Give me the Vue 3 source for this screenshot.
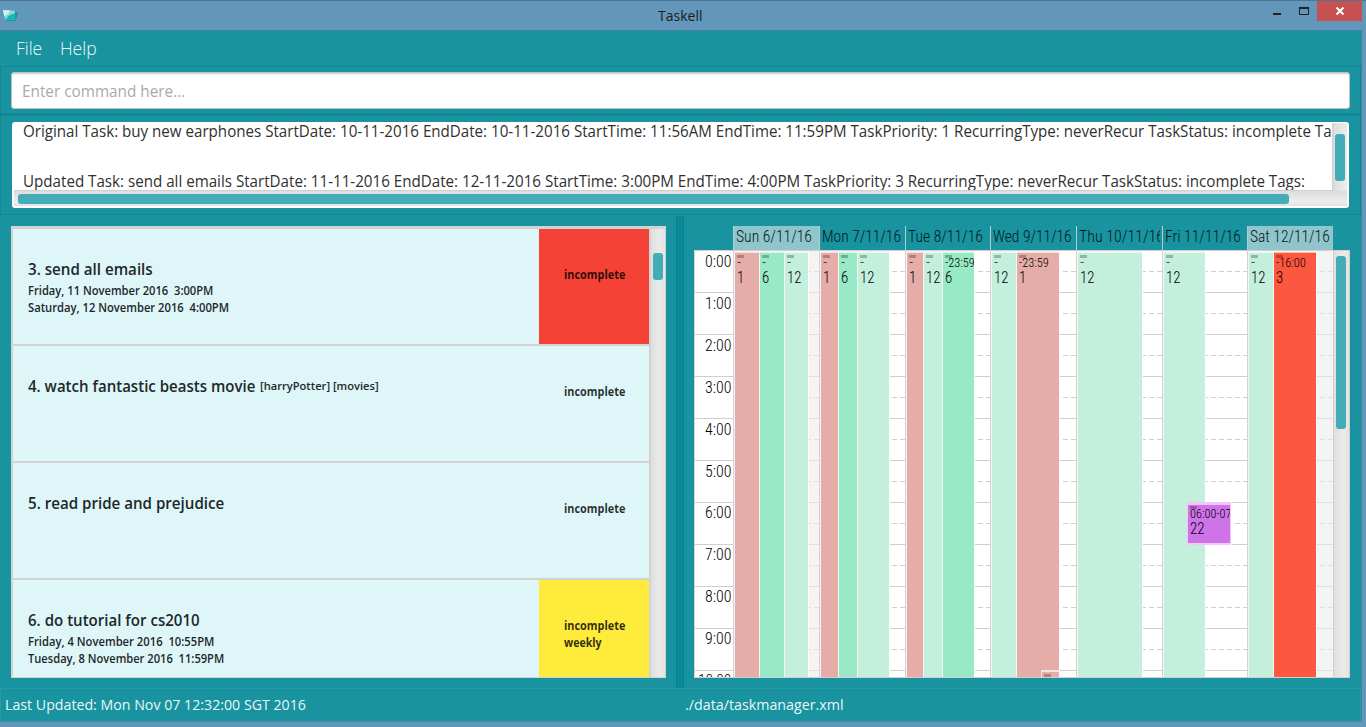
<script setup>
// Narrows or widens a label to the given pixel width
const vFit = {
  mounted(el, { value }) {
    if (value) el.style.transform = `scaleX(${value / el.offsetWidth})`
  }
}

const resultLines = [
  { text: 'Original Task: buy new earphones StartDate: 10-11-2016 EndDate: 10-11-2016 StartTime: 11:56AM EndTime: 11:59PM TaskPriority: 1 RecurringType: neverRecur TaskStatus: incomplete Ta', w: 1309 },
  { text: '', w: 0 },
  { text: 'Updated Task: send all emails StartDate: 11-11-2016 EndDate: 12-11-2016 StartTime: 3:00PM EndTime: 4:00PM TaskPriority: 3 RecurringType: neverRecur TaskStatus: incomplete Tags:', w: 1282 }
]

const tasks = [
  { title: '3. send all emails', w: 125, dates: [['Friday, 11 November 2016\u00a0 3:00PM', 185], ['Saturday, 12 November 2016\u00a0 4:00PM', 201]], status: [['incomplete', 61]], color: 'red' },
  { title: '4. watch fantastic beasts movie', w: 227, tags: '[harryPotter] [movies]', dates: [], status: [['incomplete', 61]] },
  { title: '5. read pride and prejudice', w: 196, dates: [], status: [['incomplete', 61]] },
  { title: '6. do tutorial for cs2010', w: 172, dates: [['Friday, 4 November 2016\u00a0 10:55PM', 186], ['Tuesday, 8 November 2016\u00a0 11:59PM', 196]], status: [['incomplete', 61], ['weekly', 38]], color: 'yellow' }
]

const hours = Array.from({ length: 11 }, (_, i) => i)
const ev = (color, width, time, tw, id) => ({ color, width, time, tw, id })
const days = [
  { name: 'Sun 6/11/16', w: 76, width: 86, off: true, events: [ev('pink', 25, '-', 4, '1'), ev('green', 25, '-', 4, '6'), ev('mint', 24, '-', 4, '12')] },
  { name: 'Mon 7/11/16', w: 79, width: 86, events: [ev('pink', 18, '-', 4, '1'), ev('green', 19, '-', 4, '6'), ev('mint', 32, '-', 4, '12')] },
  { name: 'Tue 8/11/16', w: 75, width: 85, events: [ev('pink', 17, '-', 4, '1'), ev('mint', 19, '-', 4, '12'), ev('green', 32, '-23:59', 30, '6')] },
  { name: 'Wed 9/11/16', w: 79, width: 86, events: [ev('mint', 25, '-', 4, '12'), ev('pink', 43, '-23:59', 30, '1')] },
  { name: 'Thu 10/11/16', w: 85, width: 86, events: [ev('mint', 65, '-', 4, '12')] },
  { name: 'Fri 11/11/16', w: 76, width: 85, events: [ev('mint', 42, '-', 4, '12')] },
  { name: 'Sat 12/11/16', w: 80, width: 86, off: true, events: [ev('mint', 25, '-', 4, '12'), ev('orange', 43, '-16:00', 30, '3')] }
]
</script>

<template>
  <div class="window">
    <header class="titlebar">
      <svg class="appicon" width="16" height="14" viewBox="0 0 16 14">
        <path d="M1 1 L12 1.5 L12.5 3.5 L15 4 L12.5 12 L2 11.5 Z" fill="#178d96" />
        <path d="M0 1 L11.8 1.6 L12.2 10.5 L2 11 Z" fill="#8ddbd5" />
        <path d="M1.5 10.8 C5 9 4 5.5 12.5 4.5 L12.2 11 Z" fill="#18b5b8" />
        <path d="M0 1 L7 1.4 L5.5 4.5 L1.2 7 Z" fill="#d2f3ec" />
      </svg>
      <span class="caption"><span v-fit="44" class="fit">Taskell</span></span>
      <div class="controls">
        <svg width="42" height="20" viewBox="0 0 42 20" shape-rendering="crispEdges">
          <rect x="-2" y="12" width="8" height="2" fill="#222" />
          <path d="M24 6h10v8H24z M25 8v5h8V8z" fill="#222" fill-rule="evenodd" />
        </svg>
        <div class="close">
          <svg width="10" height="8" viewBox="0 0 10 8"><path d="M1.5 .5 L8.5 7.5 M8.5 .5 L1.5 7.5" stroke="#fff" stroke-width="2" /></svg>
        </div>
      </div>
    </header>

    <main class="client">
      <nav class="menu">
        <span class="file"><span v-fit="26" class="fit">File</span></span>
        <span><span v-fit="37" class="fit">Help</span></span>
      </nav>

      <section class="command">
        <div class="input"><span v-fit="163" class="fit">Enter command here...</span></div>
      </section>

      <section class="result">
        <div class="resultbox">
          <div class="lines">
            <div v-for="(l, i) in resultLines" :key="i" class="line"><span v-fit="l.w" class="fit">{{ l.text }}</span></div>
          </div>
          <div class="vbar"><i></i></div>
          <div class="hbar"><i></i></div>
        </div>
      </section>

      <section class="panes">
        <div class="list">
          <div class="rows">
            <article v-for="t in tasks" :key="t.title" class="task">
              <div class="info">
                <div class="title">
                  <span class="name" :style="{ width: t.w + 'px' }"><span v-fit="t.w" class="fit">{{ t.title }}</span></span>
                  <small v-if="t.tags"><span v-fit="119" class="fit">{{ t.tags }}</span></small>
                </div>
                <div v-for="d in t.dates" :key="d[0]" class="date"><span v-fit="d[1]" class="fit">{{ d[0] }}</span></div>
              </div>
              <div class="status" :class="t.color">
                <div v-for="s in t.status" :key="s[0]" class="state"><span v-fit="s[1]" class="fit">{{ s[0] }}</span></div>
              </div>
            </article>
          </div>
          <div class="listbar"><i></i></div>
        </div>

        <div class="divider"></div>

        <div class="calendar">
          <div class="dayheads">
            <div v-for="d in days" :key="d.name" class="dayhead" :class="{ off: d.off }" :style="{ width: d.width + 'px' }">
              <div class="clip"><span v-fit="d.w" class="fit">{{ d.name }}</span></div>
            </div>
          </div>
          <div class="body">
            <div class="times">
              <div v-for="h in hours" :key="h" class="time" :class="{ late: h > 5 }"><span v-fit="h > 9 ? 33 : 26" class="fit right">{{ h }}:00</span></div>
            </div>
            <div v-for="(d, i) in days" :key="d.name" class="day" :class="{ off: d.off }" :style="{ width: d.width + 'px' }">
              <div class="cells"><div v-for="h in hours" :key="h" class="cell"></div></div>
              <div class="events">
                <div v-for="(e, j) in d.events" :key="j" class="event" :class="e.color" :style="{ width: e.width + 'px' }">
                  <b class="grip"></b>
                  <div class="span"><span v-fit="e.tw" class="fit">{{ e.time }}</span></div>
                  <div class="id"><span v-fit="e.id.length * 7.2" class="fit">{{ e.id }}</span></div>
                </div>
              </div>
              <div v-if="i === 5" class="event purple">
                <b class="grip"></b>
                <div class="span"><span v-fit="42" class="fit">06:00-07</span></div>
                <div class="id"><span v-fit="14.5" class="fit">22</span></div>
              </div>
              <div v-if="i === 3" class="stub"><b></b></div>
            </div>
            <div class="calbar"><i></i></div>
          </div>
        </div>
      </section>

      <footer class="statusbar">
        <div class="updated"><span v-fit="301" class="fit">Last Updated: Mon Nov 07 12:32:00 SGT 2016</span></div>
        <div><span v-fit="159" class="fit">./data/taskmanager.xml</span></div>
      </footer>
    </main>
  </div>
</template>

<style>
body { background: #6297bb; overflow: hidden; }
</style>

<style scoped>
* { box-sizing: border-box; }
.window { width: 1366px; height: 727px; background: #6297bb; font-family: "Open Sans", "Noto Sans", sans-serif; overflow: hidden; }
.fit { display: inline-block; white-space: pre; transform-origin: 0 50%; }
.fit.right { transform-origin: 100% 50%; }

.titlebar { height: 30px; border-top: 1px solid #4d7795; display: flex; }
.appicon { margin: 8px 0 0 3px; }
.caption { margin: 0 auto 0 639px; width: 44px; font-size: 14px; line-height: 29px; color: #1b1b1b; }
.controls { display: flex; margin-right: 4px; }
.controls > svg { overflow: visible; }
.close { width: 45px; height: 20px; background: #c75050; display: flex; align-items: center; justify-content: center; }

.client { width: 1362px; height: 691px; background: #18939f; border: solid #4680a0; border-width: 1px 1px 1px 0; display: flex; flex-direction: column; }
.menu { height: 35px; flex: none; padding-left: 16px; display: flex; color: #f0fafa; font-weight: 300; font-size: 18px; line-height: 35px; }
.file { width: 44px; }

.command { height: 49px; flex: none; border: 1px solid #108995; border-bottom-width: 2px; padding: 5px 11px 5px 10px; }
.input { width: 1339px; height: 37px; background: #fff; border: 1px solid #b8c3c4; border-radius: 3px; box-shadow: inset 0 2px 2px -1px #ccc; padding-left: 10px; font-size: 15.5px; line-height: 36px; color: #aaa; }
.result { height: 100px; flex: none; border: 1px solid #108995; border-top-width: 1px; padding: 6px 0 0 11px; }
.resultbox { width: 1337px; height: 86px; border-radius: 3px; background: #fff; padding: 1px 2px; display: grid; grid-template: 68px 15px / 1318px 15px; overflow: hidden; }
.lines { overflow: hidden; padding-left: 9px; border-bottom: 1px solid #d0d0d0; }
.line { height: 25px; line-height: 25px; margin-top: -4px; margin-bottom: 4px; font-size: 15.5px; color: #303030; white-space: nowrap; }
.vbar { background: linear-gradient(90deg, #ccc, #dedede 2px, #ededed); padding: 11px 0 0 3px; }
.vbar i { display: block; width: 10px; height: 47px; border-radius: 3px; background: #42acb7; }
.hbar { grid-column: 1 / 3; background: linear-gradient(#dcdcdc, #ededed 70%, #e2e2e2); padding: 3px 0 0 4px; }
.hbar i { display: block; width: 1271px; height: 10px; border-radius: 3px; background: #42acb7; }

.panes { flex: none; height: 473px; display: flex; padding: 1px 0 0 11px; }
.list { width: 655px; height: 452px; margin-top: 10px; background: #dff6f9; border: solid #d3d3d3; border-width: 3px 1px 1px 2px; display: flex; }
.rows { width: 636px; height: 448px; overflow: hidden; }
.task { height: 117px; border-bottom: 2px solid #d3d3d3; display: flex; background: #dff6f9; }
.info { width: 526px; padding: 29px 0 0 15px; color: #1d2829; font-weight: 600; }
.title { display: flex; align-items: center; height: 22px; font-size: 15.5px; line-height: 22px; margin-bottom: 2px; }
.name { flex: none; margin-right: 5px; white-space: nowrap; }
.title small { font-size: 11.5px; line-height: 20px; }
.date { height: 17px; line-height: 17px; font-size: 11.6px; }
.status { width: 110px; padding: 37px 0 0 25px; font-size: 11.8px; color: rgba(0, 0, 0, .82); font-weight: 700; }
.state { height: 17px; line-height: 17px; }
.red { background: #f44336; }
.yellow { background: #ffeb3b; }
.listbar { width: 16px; border-left: 2px solid #d3d3d3; background: linear-gradient(90deg, #dfdfdf, #eaeaea 60%, #e2e2e2); padding: 24px 0 0 2px; }
.listbar i { display: block; width: 10px; height: 27px; border-radius: 3px; background: #42acb7; }

.divider { width: 8px; height: 472px; margin: 0 10px; background: #0b8b98; border: solid #08808c; border-width: 0 1px; }

.calendar { width: 656px; padding-top: 10px; font-family: "Roboto Condensed", Roboto, sans-serif; font-weight: 300; color: #000; }
.dayheads { display: flex; height: 24px; margin-left: 39px; }
.dayhead { flex: none; border-left: 1px solid #b8cccf; padding-left: 2px; font-size: 16.5px; line-height: 21px; color: #021a1c; }
.dayhead.off { background: #90c5cb; }
.clip { width: 81px; overflow: hidden; white-space: nowrap; }
.body { height: 428px; display: flex; overflow: hidden; background: #fff; border: 1px solid #d0d0d0; }
.times { width: 38px; flex: none; }
.time { height: 42px; border-bottom: 1px solid #cfcfcf; text-align: right; padding-right: 2px; font-size: 16.5px; line-height: 22px; }
.time.late { line-height: 20px; }
.day { flex: none; position: relative; display: grid; height: 462px; border-left: 1px solid #d3d3d3; }
.cells, .events { grid-area: 1 / 1; }
.cell { height: 42px; border-bottom: 1px solid #cfcfcf; padding-top: 20px; }
.cell::before { content: ""; display: block; height: 1px; background: repeating-linear-gradient(90deg, #cfcfcf 0 5px, transparent 5px 8px); }
.off .cell { background: #f4f4f4; border-color: #dedede; }
.off .cell::before { opacity: .6; }
.events { display: flex; z-index: 1; }
.event { overflow: hidden; flex: none; border: solid #f5f5f5; border-width: 1px 0 0 1px; padding: 3px 0 0 2px; box-shadow: inset 0 1px rgba(255, 255, 255, .6); }
.event:last-child { box-shadow: 1px 0 rgba(255, 255, 255, .85), inset 0 1px rgba(255, 255, 255, .6); }
.grip { display: block; width: 7px; height: 3px; background: rgba(0, 0, 0, .25); }
.span { height: 10px; font-size: 12px; line-height: 11px; white-space: nowrap; }
.id { font-size: 16.5px; line-height: 20px; }
.pink { background: #e6aca8; }
.green { background: #98e9c5; }
.mint { background: #c3efdc; }
.orange { background: #fd573f; }
.day > .purple { position: absolute; z-index: 2; left: 24px; top: 251px; width: 44px; height: 43px; background: #cf74e8; border: 1px solid #f0c8f8; border-width: 2px 1px; padding: 2px 0 0 2px; }
.stub { position: absolute; z-index: 2; left: 50px; top: 419px; width: 18px; height: 12px; background: #e6aca8; border: solid #f7e3e1; border-width: 2px 0 0 1px; padding: 2px 0 0 2px; }
.stub b { display: block; width: 7px; height: 4px; background: #ae8582; }
.calbar { width: 17px; flex: none; border-left: 1px solid #d0d0d0; background: linear-gradient(90deg, #dfdfdf, #ebebeb 60%, #e2e2e2); padding: 5px 0 0 2px; }
.calbar i { display: block; width: 10px; height: 173px; border-radius: 3px; background: #42acb7; }

.statusbar { flex: 1; border: 1px solid #239ca7; display: flex; padding-left: 4px; font-size: 14px; line-height: 32px; color: #e8f7f7; font-weight: 500; }
.updated { width: 680px; }
</style>
